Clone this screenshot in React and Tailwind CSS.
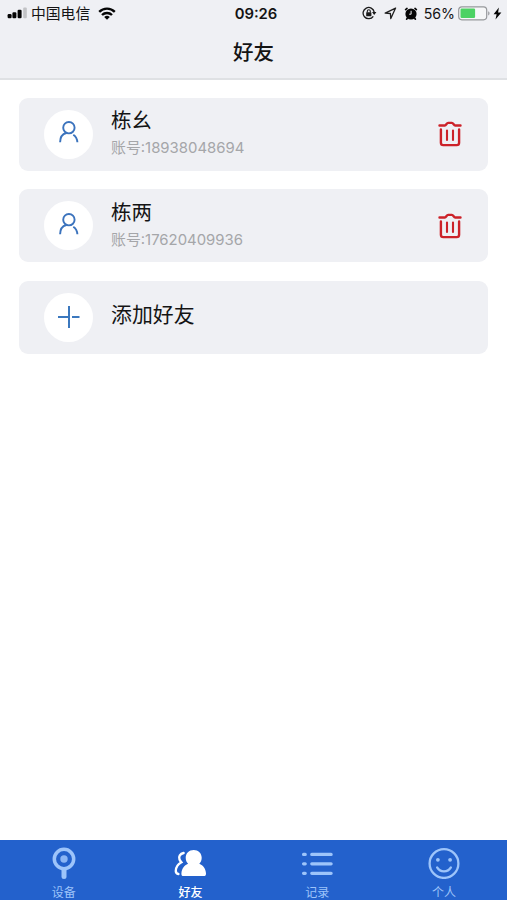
import { useState } from 'react';

const FRIENDS = [
  { name: '栋幺', account: '18938048694' },
  { name: '栋两', account: '17620409936' },
];

const SignalIcon = () => (
  <svg width="20" height="12" viewBox="0 0 20 12">
    <rect x="0.6" y="7" width="4" height="4.2" rx="1.2" fill="#050505" />
    <rect x="5.4" y="5.2" width="4" height="6" rx="1.2" fill="#050505" />
    <rect x="10.6" y="2.8" width="4" height="8.4" rx="1.2" fill="#050505" />
    <rect x="16.2" y="0.6" width="3.6" height="10.6" rx="1" fill="#c2c3c6" />
  </svg>
);

const WifiIcon = () => (
  <svg width="18" height="13" viewBox="0 0 18 13" fill="none" stroke="#050505" strokeWidth="2.4">
    <path d="M1.2 4.8a11.2 11.2 0 0 1 15.6 0" />
    <path d="M4 8a7.2 7.2 0 0 1 10 0" />
    <path d="M9 12.8 6.2 10a4 4 0 0 1 5.6 0z" fill="#050505" stroke="none" />
  </svg>
);

const RotationLockIcon = () => (
  <svg width="15" height="14" viewBox="0 0 15 14" fill="none" stroke="#1a1a1a">
    <path d="M11.3 10.3A5.6 5.6 0 1 1 12.2 6" strokeWidth="1.3" />
    <path d="M10 6.1h4.4l-2.2 3z" fill="#1a1a1a" stroke="none" />
    <rect x="4.2" y="6.2" width="5.2" height="4" rx="0.5" fill="#1a1a1a" stroke="none" />
    <path d="M5.3 6.5V5.2a1.5 1.5 0 0 1 3 0v1.3" strokeWidth="1.1" />
  </svg>
);

const LocationIcon = () => (
  <svg width="13" height="13" viewBox="0 0 13 13" fill="none" stroke="#1f1f1f" strokeWidth="1.3" strokeLinejoin="round">
    <path d="M11.6 1.1 1.2 6.2l5.2.3.4 5.1z" />
  </svg>
);

const AlarmIcon = () => (
  <svg width="14" height="13" viewBox="0 0 14 13">
    <circle cx="7" cy="7" r="5.6" fill="#050505" />
    <path
      d="M1.6 2.6 3 1.4M12.4 2.6 11 1.4M3.4 11l-.8 1.2M10.6 11l.8 1.2"
      stroke="#050505"
      strokeWidth="1.6"
      strokeLinecap="round"
    />
    <path d="M7.1 3.8v3.4H5.2" fill="none" stroke="#eff0f4" strokeWidth="1" />
  </svg>
);

const BatteryIcon = () => (
  <svg width="33" height="15" viewBox="0 0 33 15">
    <rect x="0.7" y="0.9" width="28" height="12.9" rx="3.2" fill="#f6f7f8" stroke="#97999c" strokeWidth="1.2" />
    <rect x="2.5" y="2.6" width="14.6" height="9.4" rx="1.2" fill="#4cd263" />
    <path d="M30.2 5.3c1.8.6 1.8 3.6 0 4.2z" fill="#97999c" />
  </svg>
);

const BoltIcon = () => (
  <svg width="9" height="13" viewBox="0 0 9 13">
    <path d="M5.9.6.6 7.2h3l-1.1 5.4 5.9-7.2H5.1z" fill="#050505" />
  </svg>
);

const PersonIcon = () => (
  <svg width="22" height="26" viewBox="0 0 22 26" fill="none" stroke="#3b73bd" strokeWidth="1.9">
    <circle cx="10.9" cy="6.7" r="5.7" />
    <path d="M2.1 21.3c0-4.7 2.2-8.2 6.2-9.3" />
    <path d="M15.3 13.7c2.5 1.7 3.9 4.4 4.1 7.6" />
  </svg>
);

const PlusIcon = () => (
  <svg width="24" height="24" viewBox="0 0 24 24" fill="none" stroke="#3b78be" strokeWidth="2">
    <path d="M12 1v22M1 12h11M15 12h7.5" />
  </svg>
);

const TrashIcon = () => (
  <svg width="24" height="26" viewBox="0 0 24 26" fill="none" stroke="#cc2229" strokeWidth="2.4" strokeLinecap="round" strokeLinejoin="round">
    <path d="M1.5 4.5h5.3c1.5 0 1.7-2.6 3.4-2.6h3.6c1.700 0 1.900 2.600 3.400 2.600h5.300" />
    <path d="M2.9 8.500v13.200c0 1.600.8 2.400 2.400 2.400h13.400c1.600 0 2.400-.8 2.400-2.400V8.500" />
    <path d="M9 9.500v9.400M15 9.500v9.400" strokeWidth="2.100" />
  </svg>
);

const DeviceIcon = () => (
  <svg width="34" height="34" viewBox="0 0 34 34" fill="none" stroke="currentColor">
    <circle cx="17" cy="14" r="9.7" strokeWidth="3.5" />
    <circle cx="17" cy="14" r="3.7" fill="currentColor" stroke="none" opacity="0.85" />
    <path d="M17 24.5v7" strokeWidth="5" strokeLinecap="round" />
  </svg>
);

const FriendsIcon = () => (
  <svg width="34" height="34" viewBox="0.8 0 34 34">
    <path
      d="M20.5 5c4.6 0 8 3.4 8 7.7 0 2.5-.9 4.5-2.4 6 4 1.5 6.5 5 6.7 9.700.1 1.700-.6 2.600-2.300 2.600H10.400c-1.700 0-2.300-1-2.200-2.600.3-4.700 2.700-8.200 6.700-9.700-1.500-1.500-2.400-3.500-2.400-6 0-4.300 3.400-7.700 8-7.700z"
      fill="currentColor"
    />
    <path
      d="M10.4 8C6.8 8.700 5.300 11.600 6.300 14.300c.4 1.200 1.100 2 1.900 3C4.500 19.400 2.600 22.200 2.600 26c0 1.700.8 2.700 2.600 3"
      fill="none"
      stroke="currentColor"
      strokeWidth="2.400"
      strokeLinecap="round"
    />
  </svg>
);

const RecordsIcon = () => (
  <svg width="34" height="34" viewBox="0 0 34 34" fill="none" stroke="currentColor" strokeWidth="3.3" strokeLinecap="round">
    <path d="M3.6 9.4h1.6M3.6 18.8h1.6M3.6 28.3h1.6M11.8 9.4h19.3M11.8 18.8h19.3M11.8 28.3h19.3" />
  </svg>
);

const ProfileIcon = () => (
  <svg width="34" height="34" viewBox="0 0 34 34" fill="none" stroke="currentColor" strokeWidth="2.3" strokeLinecap="round">
    <circle cx="17" cy="18.500" r="14.400" />
    <path d="M10.100 22.400c1.500 2.500 3.900 4 6.900 4s5.400-1.500 6.900-4" />
    <circle cx="10.900" cy="14.800" r="1.900" fill="currentColor" stroke="none" />
    <circle cx="23.100" cy="14.800" r="1.900" fill="currentColor" stroke="none" />
  </svg>
);

const TABS = [
  { id: 'devices', label: '设备', Icon: DeviceIcon },
  { id: 'friends', label: '好友', Icon: FriendsIcon },
  { id: 'records', label: '记录', Icon: RecordsIcon },
  { id: 'profile', label: '个人', Icon: ProfileIcon },
];

const StatusBar = () => (
  <div className="grid h-[27px] grid-cols-[1fr_auto_1fr] items-center pl-[7px] pr-[5px] text-[14.8px] leading-none text-[#141414]">
    <div className="flex items-center">
      <SignalIcon />
      <span className="ml-1 pt-px">中国电信</span>
      <span className="ml-2">
        <WifiIcon />
      </span>
    </div>
    <span className="pl-[3px] pt-0.5 text-[14.8px] font-semibold">09:26</span>
    <div className="flex items-center justify-end">
      <RotationLockIcon />
      <span className="ml-[7px]">
        <LocationIcon />
      </span>
      <span className="ml-[7px]">
        <AlarmIcon />
      </span>
      <span className="ml-[6px] pt-0.5 text-[14.2px]">56%</span>
      <span className="ml-[3px]">
        <BatteryIcon />
      </span>
      <span className="ml-[2px]">
        <BoltIcon />
      </span>
    </div>
  </div>
);

const Avatar = ({ children }) => (
  <div className="flex size-[49px] shrink-0 items-center justify-center rounded-full bg-white">{children}</div>
);

const App = () => {
  const [friends, setFriends] = useState(FRIENDS);
  const [activeTab, setActiveTab] = useState('friends');

  const handleDelete = (account) => {
    setFriends(friends.filter((friend) => friend.account !== account));
  };

  return (
    <div className="flex h-screen w-full flex-col bg-white font-[Inter,'Noto_Sans_CJK_SC',sans-serif] text-[#141414]">
      <header className="h-20 border-b-2 border-[#dfe1e4] bg-[#eff0f4]">
        <StatusBar />
        <h1 className="pt-[11px] text-center text-[20.5px] font-medium leading-[30px]">好友</h1>
      </header>

      <main className="flex flex-1 flex-col gap-[18.5px] px-[19px] pt-[17.5px]">
        {friends.map((friend) => (
          <div key={friend.account} className="flex h-[73px] items-center rounded-[9px] bg-[#eff0f4] pl-[25px] pr-[26px]">
            <Avatar>
              <PersonIcon />
            </Avatar>
            <div className="ml-[18px] flex-1 pb-px">
              <p className="text-[20.5px] leading-[30px]">{friend.name}</p>
              <p className="text-[14.9px] leading-[25px] text-[#a5a6a9]">账号:{friend.account}</p>
            </div>
            <button onClick={() => handleDelete(friend.account)} aria-label="删除">
              <TrashIcon />
            </button>
          </div>
        ))}

        <button className="flex h-[73px] items-center rounded-[9px] bg-[#eff0f4] pl-[25px] text-left">
          <Avatar>
            <PlusIcon />
          </Avatar>
          <span className="ml-[18px] pb-1 text-[20.9px] leading-[30px]">添加好友</span>
        </button>
      </main>

      <nav className="grid h-[60px] grid-cols-4 bg-[#2361cc]">
        {TABS.map(({ id, label, Icon }) => (
          <button
            key={id}
            onClick={() => setActiveTab(id)}
            className={`flex flex-col items-center pl-px pt-[5px] ${activeTab === id ? 'text-white' : 'text-[#9dc4fa]'}`}
          >
            <Icon />
            <span className={`mt-1.5 text-[12px] leading-[16px] ${activeTab === id ? 'font-medium' : ''}`}>{label}</span>
          </button>
        ))}
      </nav>
    </div>
  );
};

export default App;
